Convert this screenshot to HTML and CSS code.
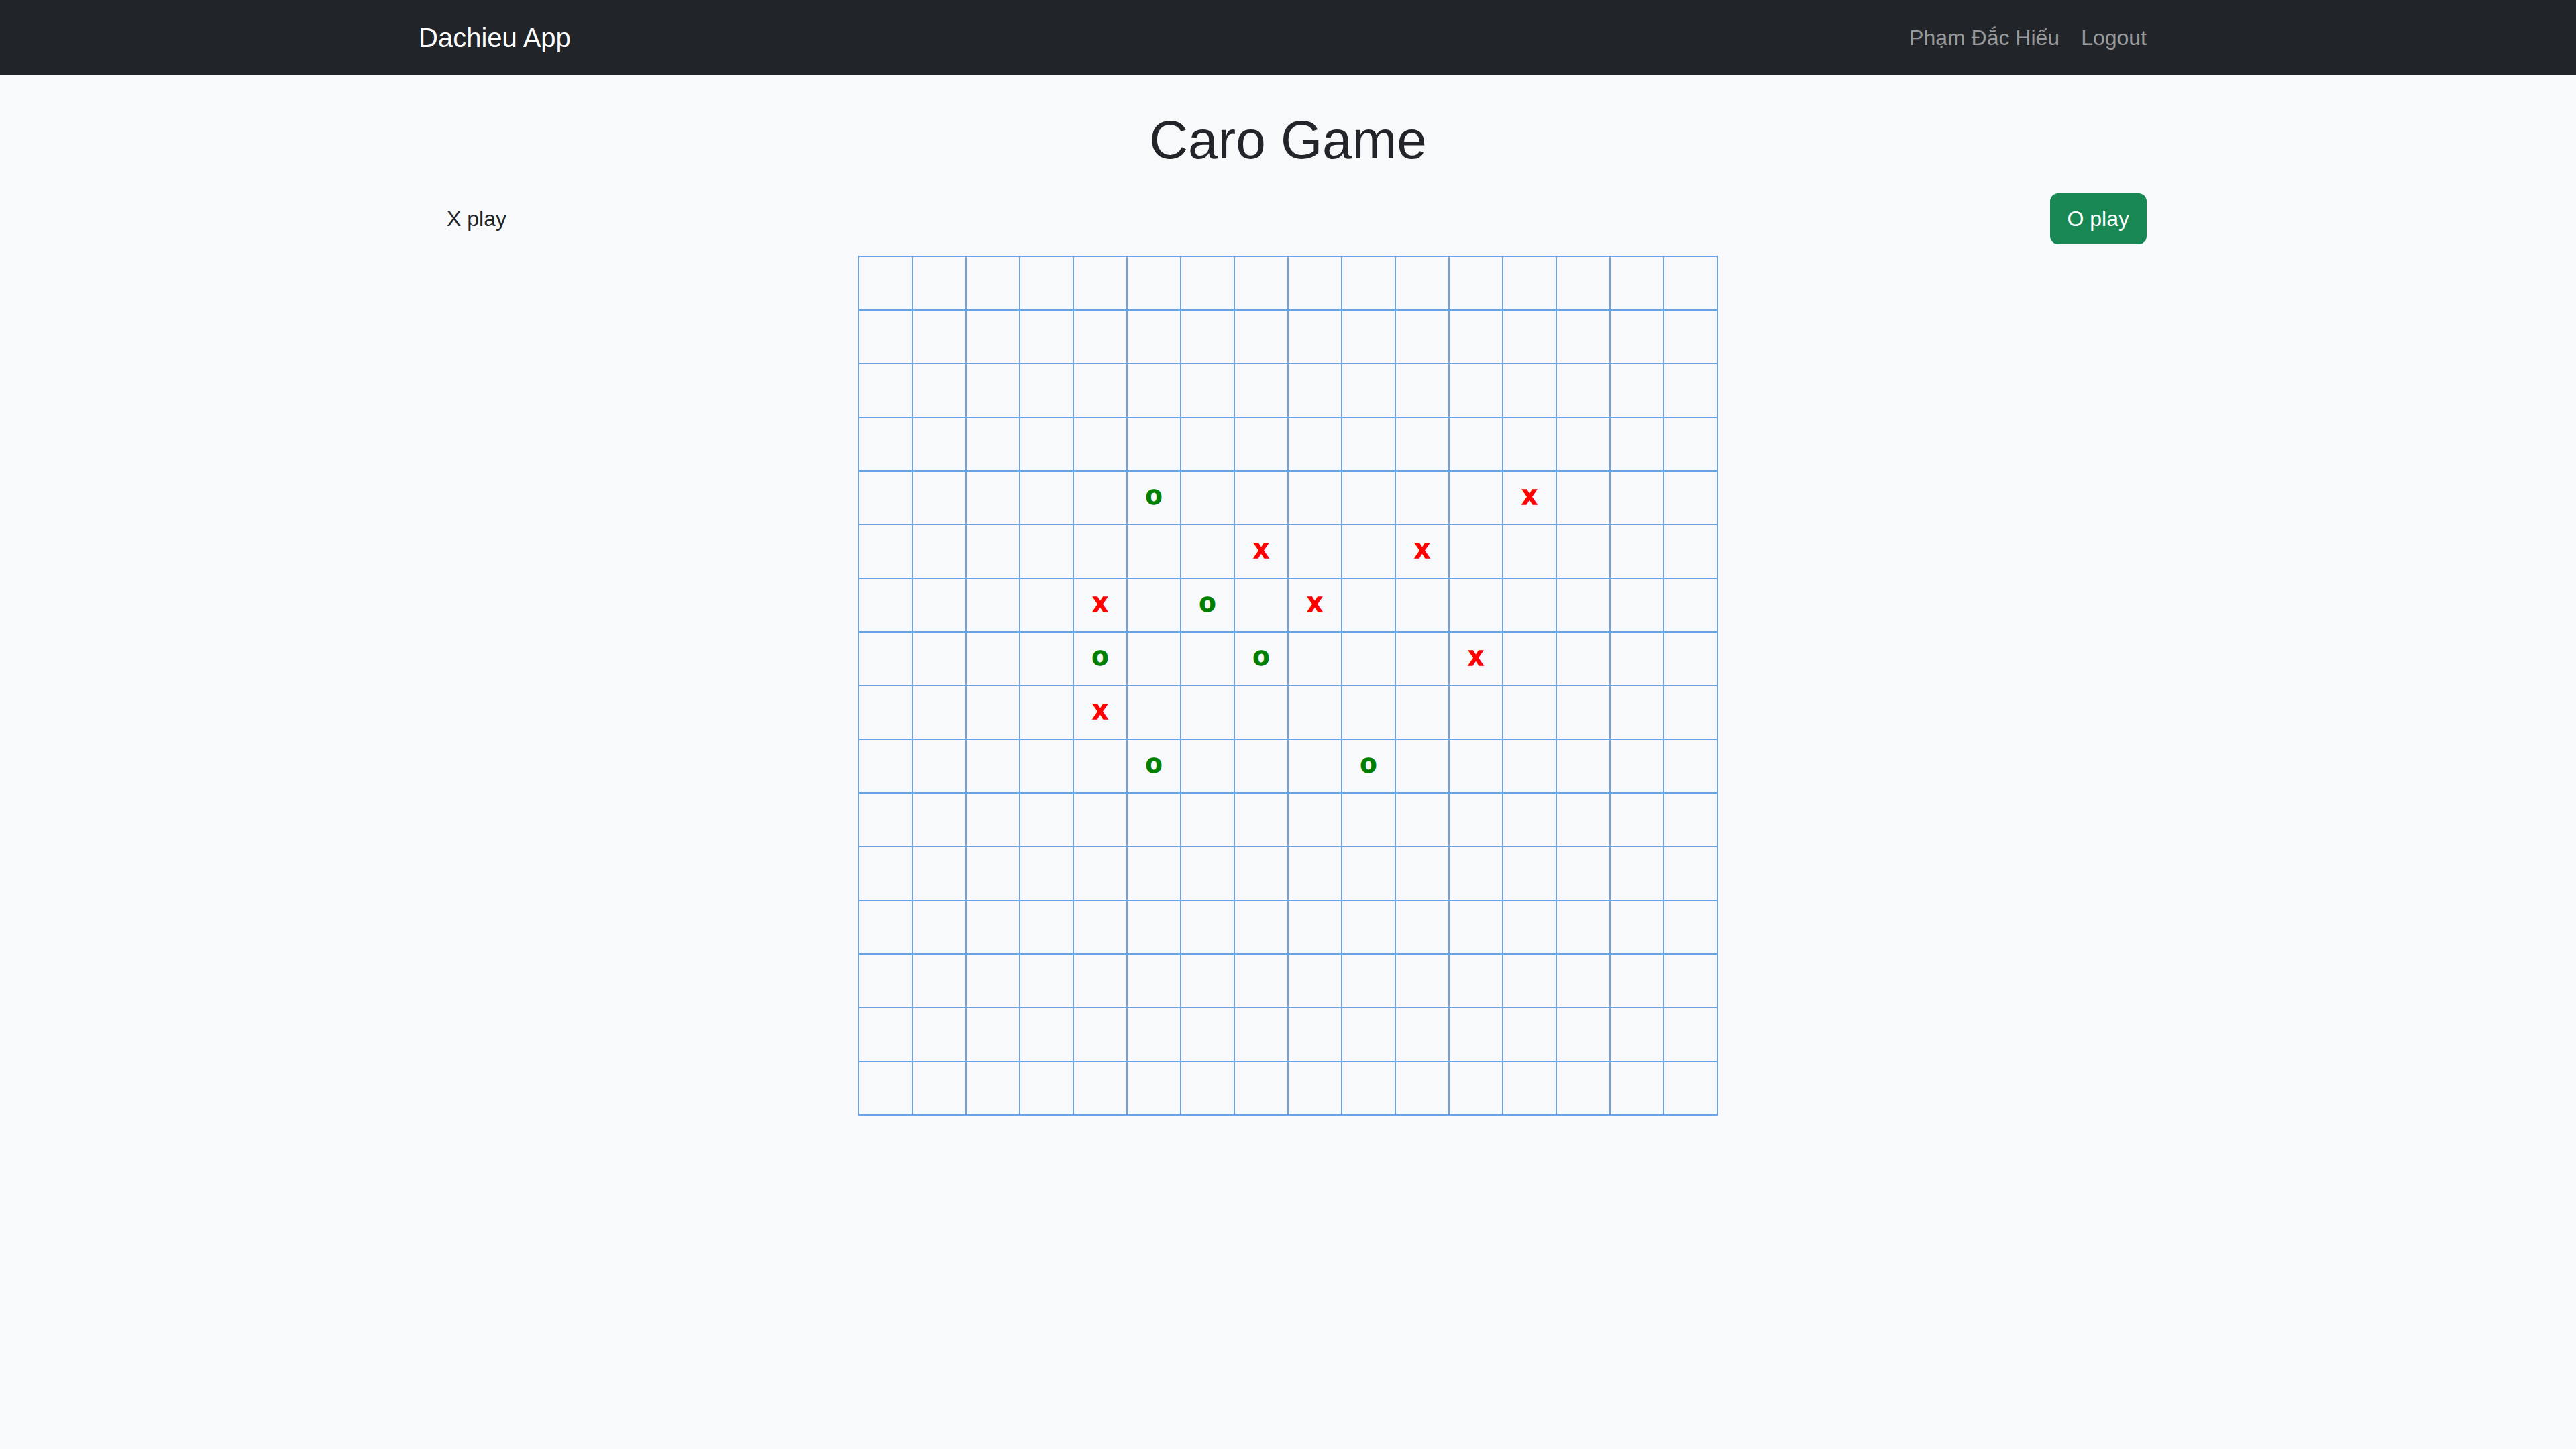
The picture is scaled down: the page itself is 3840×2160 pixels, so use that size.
FILE: index.html
```html
<!DOCTYPE html>
<html lang="vi">
<head>
<meta charset="utf-8">
<title>Caro Game</title>
<link rel="stylesheet" href="styles.css">
</head>
<body>
<nav class="navbar">
  <div class="container nav-inner">
    <a class="brand" href="#">Dachieu App</a>
    <div class="nav-links">
      <a class="nav-link" href="#">Phạm Đắc Hiếu</a>
      <a class="nav-link" href="#">Logout</a>
    </div>
  </div>
</nav>
<main class="container">
  <h1 class="title">Caro Game</h1>
  <div class="players">
    <button class="btn btn-idle">X play</button>
    <button class="btn btn-active">O play</button>
  </div>
  <div class="board-wrap">
    <div class="board" id="board"></div>
  </div>
</main>
<script src="app.js"></script>
</body>
</html>
```

FILE: styles.css
```css
html, body {
  margin: 0;
  padding: 0;
}
body {
  background: #f8f9fa;
  font-family: "Liberation Sans", Arial, sans-serif;
  color: #212529;
  min-height: 2160px;
}
.container {
  width: 2640px;
  margin: 0 auto;
  padding: 0 24px;
  box-sizing: border-box;
}
.navbar {
  background: #212529;
  height: 112px;
}
.nav-inner {
  display: flex;
  align-items: center;
  justify-content: space-between;
  height: 112px;
}
.brand {
  color: #ffffff;
  font-size: 40px;
  line-height: 60px;
  text-decoration: none;
}
.nav-links {
  display: flex;
}
.nav-link {
  color: rgba(255, 255, 255, 0.55);
  font-size: 32px;
  line-height: 48px;
  padding: 0 16px;
  text-decoration: none;
}
.title {
  margin: 49px 0 31px;
  font-size: 80px;
  line-height: 1.2;
  font-weight: 500;
  text-align: center;
}
.players {
  display: flex;
  justify-content: space-between;
  padding: 0 16px;
}
.btn {
  font-family: "Liberation Sans", Arial, sans-serif;
  font-size: 32px;
  line-height: 48px;
  padding: 12px 24px;
  border: 2px solid transparent;
  border-radius: 12px;
  background: transparent;
  color: #212529;
}
.btn-active {
  background: #198754;
  border-color: #198754;
  color: #ffffff;
}
.board-wrap {
  display: flex;
  justify-content: center;
  margin-top: 17px;
}
.board {
  display: grid;
  grid-template-columns: repeat(16, 78px);
  grid-auto-rows: 78px;
  gap: 2px;
  padding: 2px;
  background: #6ea2e8;
}
.cell {
  background: #f8f9fa;
  display: flex;
  align-items: center;
  justify-content: center;
  font-size: 40px;
  font-weight: bold;
  line-height: 1;
  padding-bottom: 8px;
  box-sizing: border-box;
  -webkit-text-stroke: 1.5px currentColor;
}
.mark-x {
  color: #ff0000;
}
.mark-o {
  color: #008000;
}
```

FILE: app.js
```js
var marks = {
  "4,5": "o", "4,12": "x",
  "5,7": "x", "5,10": "x",
  "6,4": "x", "6,6": "o", "6,8": "x",
  "7,4": "o", "7,7": "o", "7,11": "x",
  "8,4": "x",
  "9,5": "o", "9,9": "o"
};
var board = document.getElementById("board");
for (var r = 0; r < 16; r++) {
  for (var c = 0; c < 16; c++) {
    var cell = document.createElement("div");
    cell.className = "cell";
    var m = marks[r + "," + c];
    if (m) {
      cell.textContent = m;
      cell.className += m === "x" ? " mark-x" : " mark-o";
    }
    board.appendChild(cell);
  }
}
```
